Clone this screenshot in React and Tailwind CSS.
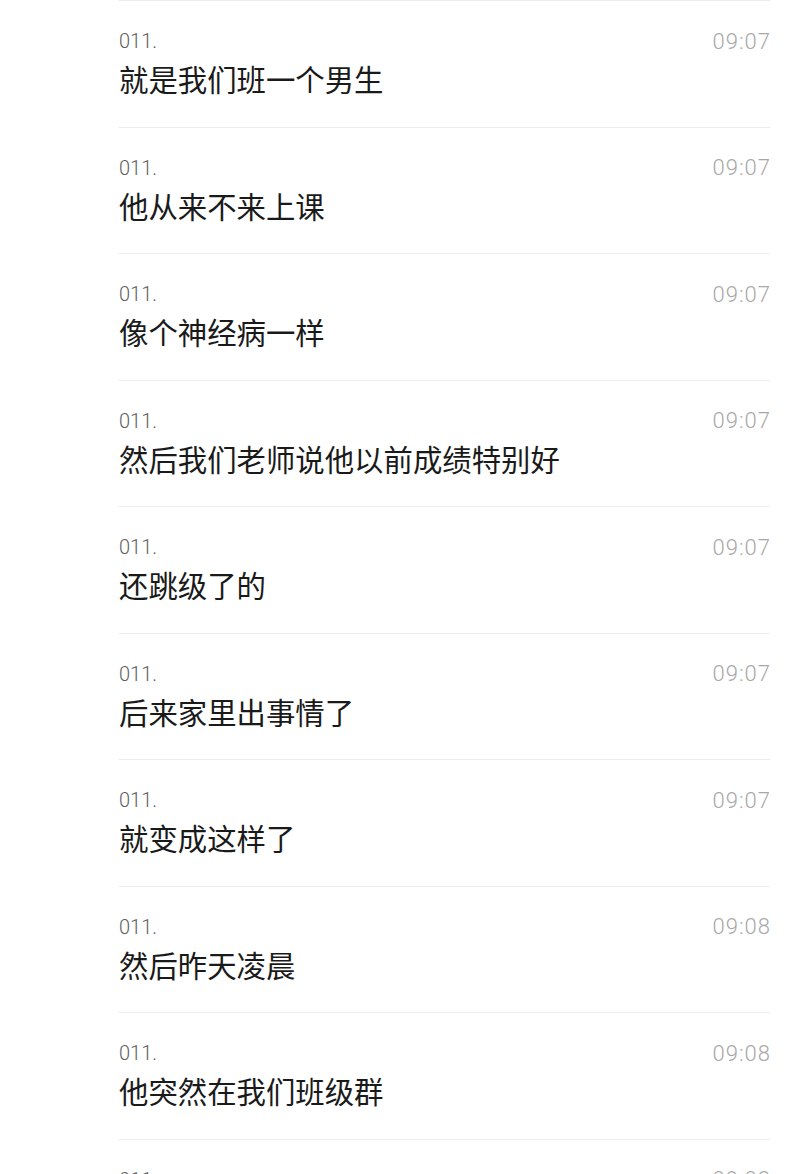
const MESSAGES = [
  { text: "就是我们班一个男生", time: "09:07" },
  { text: "他从来不来上课", time: "09:07" },
  { text: "像个神经病一样", time: "09:07" },
  { text: "然后我们老师说他以前成绩特别好", time: "09:07" },
  { text: "还跳级了的", time: "09:07" },
  { text: "后来家里出事情了", time: "09:07" },
  { text: "就变成这样了", time: "09:07" },
  { text: "然后昨天凌晨", time: "09:08" },
  { text: "他突然在我们班级群", time: "09:08" },
  { text: "", time: "09:08" },
];

function MessageRow({ text, time }) {
  return (
    <div className="h-[126.55px] shrink-0 border-t border-[#ececec] pt-[27px]">
      <div className="flex items-center justify-between h-[26px]">
        <span className="text-[20px] font-light text-[#5e5e5e]">011.</span>
        <span className="text-[22px] font-light text-[#a8a8a8] tracking-[1px] -mr-[1px]">{time}</span>
      </div>
      <p className="mt-[10px] h-[34px] leading-[34px] text-[29.4px] text-[#1a1a1a]">{text}</p>
    </div>
  );
}

export default function App() {
  return (
    <div
      className="h-[1174px] w-[800px] overflow-hidden bg-white"
      style={{ fontFamily: '"Roboto", "Noto Sans CJK SC", sans-serif' }}
    >
      <div className="ml-[119px] mr-[30px] flex flex-col">
        {MESSAGES.map((m, i) => (
          <MessageRow key={i} text={m.text} time={m.time} />
        ))}
      </div>
    </div>
  );
}
